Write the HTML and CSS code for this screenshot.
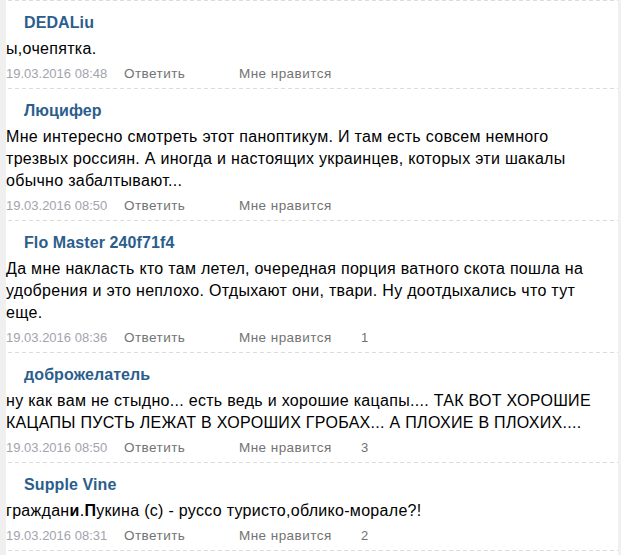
FILE: index.html
```html
<!DOCTYPE html>
<html lang="ru">
<head>
<meta charset="utf-8">
<title>Комментарии</title>
<link rel="stylesheet" href="styles.css">
</head>
<body>
<div class="page">
  <div class="list">
    <div class="comment">
      <div class="sep"></div>
      <div class="name">DEDALiu</div>
      <div class="text">ы,очепятка.</div>
      <div class="meta"><span class="date">19.03.2016 08:48</span><span class="reply">Ответить</span><span class="like">Мне нравится</span><span class="count"></span></div>
    </div>
    <div class="comment">
      <div class="sep"></div>
      <div class="name">Люцифер</div>
      <div class="text">Мне интересно смотреть этот паноптикум. И там есть совсем немного трезвых россиян. А иногда и настоящих украинцев, которых эти шакалы обычно забалтывают...</div>
      <div class="meta"><span class="date">19.03.2016 08:50</span><span class="reply">Ответить</span><span class="like">Мне нравится</span><span class="count"></span></div>
    </div>
    <div class="comment">
      <div class="sep"></div>
      <div class="name">Flo Master 240f71f4</div>
      <div class="text">Да мне накласть кто там летел, очередная порция ватного скота пошла на удобрения и это неплохо. Отдыхают они, твари. Ну доотдыхались что тут еще.</div>
      <div class="meta"><span class="date">19.03.2016 08:36</span><span class="reply">Ответить</span><span class="like">Мне нравится</span><span class="count">1</span></div>
    </div>
    <div class="comment">
      <div class="sep"></div>
      <div class="name">доброжелатель</div>
      <div class="text">ну как вам не стыдно... есть ведь и хорошие кацапы.... ТАК ВОТ ХОРОШИЕ КАЦАПЫ ПУСТЬ ЛЕЖАТ В ХОРОШИХ ГРОБАХ... А ПЛОХИЕ В ПЛОХИХ....</div>
      <div class="meta"><span class="date">19.03.2016 08:50</span><span class="reply">Ответить</span><span class="like">Мне нравится</span><span class="count">3</span></div>
    </div>
    <div class="comment">
      <div class="sep"></div>
      <div class="name">Supple Vine</div>
      <div class="text">граждан<b>и</b>.<b>П</b>укина (с) - руссо туристо,облико-морале?!</div>
      <div class="meta"><span class="date">19.03.2016 08:31</span><span class="reply">Ответить</span><span class="like">Мне нравится</span><span class="count">2</span></div>
    </div>
    <div class="sep"></div>
  </div>
</div>
</body>
</html>
```

FILE: styles.css
```css
html, body {
  margin: 0;
  padding: 0;
  background: #f0f0f0;
}
.page {
  margin: 0 3px 0 6px;
  background: #ffffff;
  min-height: 555px;
  font-family: "Liberation Sans", Arial, sans-serif;
}
.list {
  display: flex;
  flex-direction: column;
}
.sep {
  height: 1px;
  margin-left: 2px;
  background: repeating-linear-gradient(to right, #dcdcdc 0 4px, transparent 4px 7px);
}
.comment {
  display: flex;
  flex-direction: column;
  padding-bottom: 5px;
}
.name {
  margin-top: 13px;
  padding-left: 18px;
  font-size: 16px;
  line-height: 18px;
  font-weight: bold;
  letter-spacing: 0.1px;
  color: #2b5e8c;
}
.text {
  margin-top: 6px;
  max-width: 590px;
  font-size: 16px;
  line-height: 22px;
  letter-spacing: 0.3px;
  color: #000;
}
.text b {
  font-weight: bold;
}
.meta {
  margin-top: 5px;
  display: grid;
  grid-template-columns: 118px 115px 122px auto;
  font-size: 13.5px;
  line-height: 18px;
  color: #737373;
}
.date {
  font-size: 13px;
  color: #a3a3ad;
}
.reply,
.like {
  letter-spacing: 0.45px;
}
.count {
  font-size: 13px;
}
```
